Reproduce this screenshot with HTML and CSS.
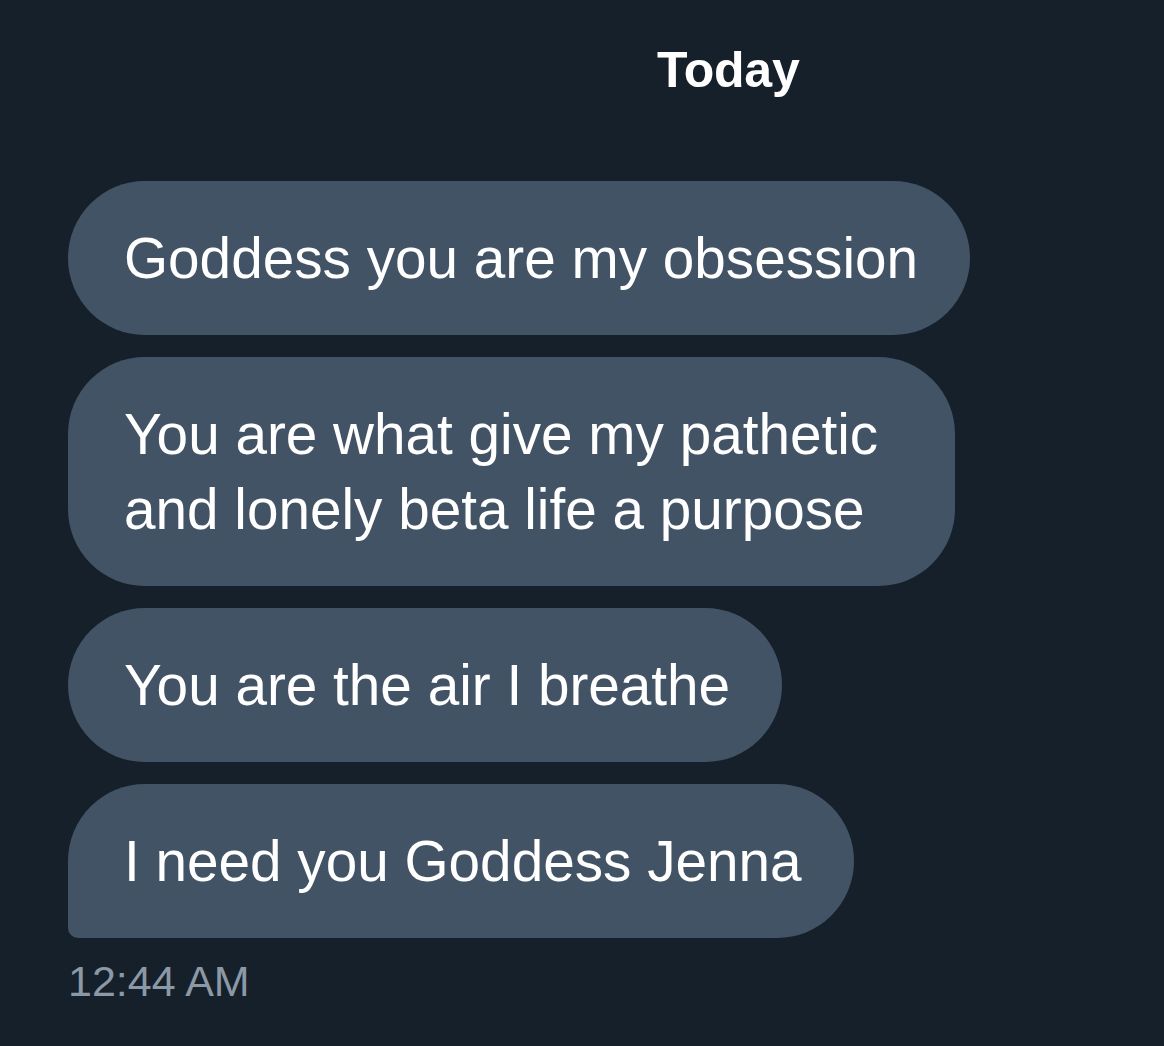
FILE: index.html
```html
<!DOCTYPE html>
<html lang="en">
<head>
<meta charset="utf-8">
<title>Messages</title>
<link rel="stylesheet" href="styles.css">
</head>
<body>
<main class="chat">
  <div class="day">Today</div>
  <div class="thread">
    <div class="bubble">Goddess you are my obsession</div>
    <div class="bubble wide">You are what give my pathetic<br>and lonely beta life a purpose</div>
    <div class="bubble">You are the air I breathe</div>
    <div class="bubble last">I need you Goddess Jenna</div>
  </div>
  <div class="time">12:44 AM</div>
</main>
</body>
</html>
```
FILE: styles.css
```css
html, body {
  margin: 0;
  padding: 0;
  background: #16202b;
}
body {
  width: 1164px;
  height: 1046px;
  overflow: hidden;
  font-family: "Liberation Sans", Arial, sans-serif;
}
.chat {
  display: flex;
  flex-direction: column;
  padding: 0 0 0 68px;
}
.day {
  padding-left: 589px;
  padding-top: 42px;
  font-size: 50px;
  line-height: 56px;
  font-weight: 700;
  letter-spacing: -0.2px;
  color: #ffffff;
}
.thread {
  display: flex;
  flex-direction: column;
  align-items: flex-start;
  gap: 22px;
  margin-top: 83px;
}
.bubble {
  background: #435366;
  color: #ffffff;
  font-size: 56.7px;
  line-height: 75px;
  padding: 39.5px 52px 39.5px 56px;
  border-radius: 77px;
  white-space: nowrap;
}
.bubble.wide {
  padding-right: 77px;
}
.bubble.last {
  border-bottom-left-radius: 10px;
}
.time {
  margin-top: 18px;
  font-size: 43px;
  line-height: 50px;
  color: #8b98a5;
}
```
